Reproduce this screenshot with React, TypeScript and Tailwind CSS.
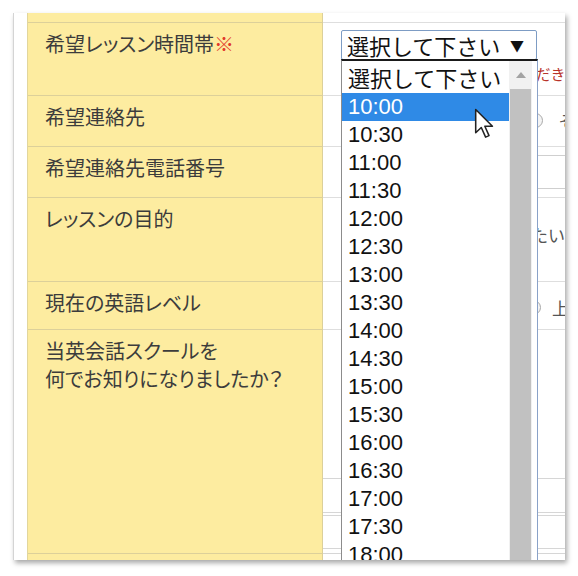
import React from "react";

const times = [
  "10:00", "10:30", "11:00", "11:30", "12:00", "12:30", "13:00", "13:30", "14:00",
  "14:30", "15:00", "15:30", "16:00", "16:30", "17:00", "17:30", "18:00", "18:30",
];

const labelFont = "font-['Noto_Sans_CJK_JP',sans-serif] [font-feature-settings:'palt']";
const listFont = "font-['Liberation_Sans','Noto_Sans_CJK_JP',sans-serif]";

function Radio() {
  return <span className="inline-block h-[15px] w-[15px] shrink-0 rounded-full border border-[#a9a9a9] bg-[#f4f4f4]" />;
}

function Row({ h, label, children }: { h: string; label?: React.ReactNode; children?: React.ReactNode }) {
  return (
    <div className={`flex ${h}`}>
      <div className={`w-[295px] shrink-0 border-t border-r border-[#dcd09a] bg-[#fdeca0] pl-[17px] pt-[7px] text-[20px] leading-[28px] text-[#3c3c3c] ${labelFont}`}>
        {label}
      </div>
      <div className="flex-1 border-t border-[#dedede] bg-white">{children}</div>
    </div>
  );
}

function Cursor() {
  return (
    <svg width="22" height="31" viewBox="0 0 14 20" className="absolute left-[460px] top-[95px]">
      <path d="M1 1 L1 16 L4.6 12.6 L7.4 18.8 L9.6 17.8 L6.9 11.8 L11.8 11.8 Z" fill="#fff" stroke="#222" strokeWidth="1" strokeLinejoin="round" />
    </svg>
  );
}

export default function App() {
  return (
    <div className="h-[576px] w-[578px] bg-white pl-[13px] pt-[13px]">
      <div className="relative h-[547px] w-[552px] overflow-hidden border-l border-[#d4d4d4] bg-white shadow-[2px_3px_5px_rgba(0,0,0,0.35)]">
        <div className="flex h-full">
          <div className="w-[13px] shrink-0 bg-white" />
          <div className="flex flex-1 flex-col border-l border-[#e2d69c]">
            {/* top strip */}
            <div className="flex h-[9px]">
              <div className="w-[295px] shrink-0 border-r border-[#dcd09a] bg-[#fdeca0]" />
              <div className="flex-1 bg-white" />
            </div>

            <Row h="h-[73px]" label={<>希望レッスン時間帯<span className="text-[#e23a2a]">※</span></>}>
              <div className="pl-[18px] pt-[7px]">
                <div className={`flex h-[30px] w-[196px] items-center justify-between rounded-[2px] border border-[#7d9cc4] pl-[5px] pr-[12px] text-[22px] text-[#111] ${labelFont}`}>
                  <span className="[font-feature-settings:normal]">選択して下さい</span>
                  <span className="text-[14px]">▼</span>
                </div>
                <div className={`mt-[5px] whitespace-nowrap text-[15px] leading-[18px] text-[#b8322a] ${labelFont} [font-feature-settings:normal]`}>
                  ※第二希望まで入力していただきますよう
                </div>
              </div>
            </Row>

            <Row h="h-[51px]" label="希望連絡先">
              <div className={`flex items-center gap-[16px] pl-[205px] pt-[12px] text-[17px] text-[#555] ${labelFont}`}>
                <Radio />
                <span className="whitespace-nowrap">その他</span>
              </div>
            </Row>

            <Row h="h-[51px]" label="希望連絡先電話番号">
              <div className="pl-[18px] pt-[8px]">
                <div className="h-[34px] w-[320px] border border-[#cfcfcf] bg-white" />
              </div>
            </Row>

            <Row h="h-[84px]" label="レッスンの目的">
              <div className={`flex items-center gap-[7px] whitespace-nowrap pl-[18px] pt-[24px] text-[17px] text-[#555] ${labelFont} [font-feature-settings:normal]`}>
                <span className="inline-block h-[13px] w-[13px] border border-[#999]" />
                英語で自由に会話をしたい
              </div>
            </Row>

            <Row h="h-[48px]" label="現在の英語レベル">
              <div className={`flex items-center gap-[11px] pl-[203px] pt-[13px] text-[17px] text-[#555] ${labelFont}`}>
                <Radio />
                <span className="whitespace-nowrap">上級</span>
              </div>
            </Row>

            <Row
              h="h-[224px]"
              label={
                <>
                  当英会話スクールを
                  <br />
                  何でお知りになりましたか？
                </>
              }
            >
              <div className="h-[148px]" />
              <div className="h-[34px] border-t border-[#d6d6d6]" />
              <div className="h-[3px] border-t border-[#d6d6d6]" />
              <div className="h-[33px] border-t border-[#d6d6d6]" />
              <div className="h-[4px] border-t border-[#d6d6d6]" />
            </Row>

            <div className="flex flex-1">
              <div className="w-[295px] shrink-0 border-t border-r border-[#dcd09a] bg-[#fdeca0]" />
              <div className="flex-1 border-t border-[#d6d6d6] bg-white" />
            </div>
          </div>
        </div>

        {/* open select list */}
        <div className="absolute left-[327px] top-[46px] flex h-[520px] w-[197px] border-t-2 border-l border-r border-t-[#1a1a1a] border-l-[#8c8c8c] border-r-[#8aa2c8] bg-white">
          <div className={`w-[167px] shrink-0 text-[22px] text-[#111] ${listFont}`}>
            <div className={`flex h-[32px] items-center pl-[6px] ${labelFont} [font-feature-settings:normal]`}>選択して下さい</div>
            {times.map((t, i) => (
              <div
                key={t}
                className={`flex h-[28px] items-center pl-[6px] leading-none ${i === 0 ? "bg-[#2f8ae6] text-white" : ""}`}
              >
                {t}
              </div>
            ))}
          </div>
          <div className="flex w-[23px] shrink-0 flex-col bg-[#f1f1f1]">
            <div className="flex h-[28px] items-center justify-center">
              <svg width="10" height="6" viewBox="0 0 10 6">
                <path d="M0 6 L5 0 L10 6 Z" fill="#a3a3a3" />
              </svg>
            </div>
            <div className="mx-[1px] flex-1 bg-[#c1c1c1]" />
          </div>
        </div>

        <Cursor />
      </div>
    </div>
  );
}
